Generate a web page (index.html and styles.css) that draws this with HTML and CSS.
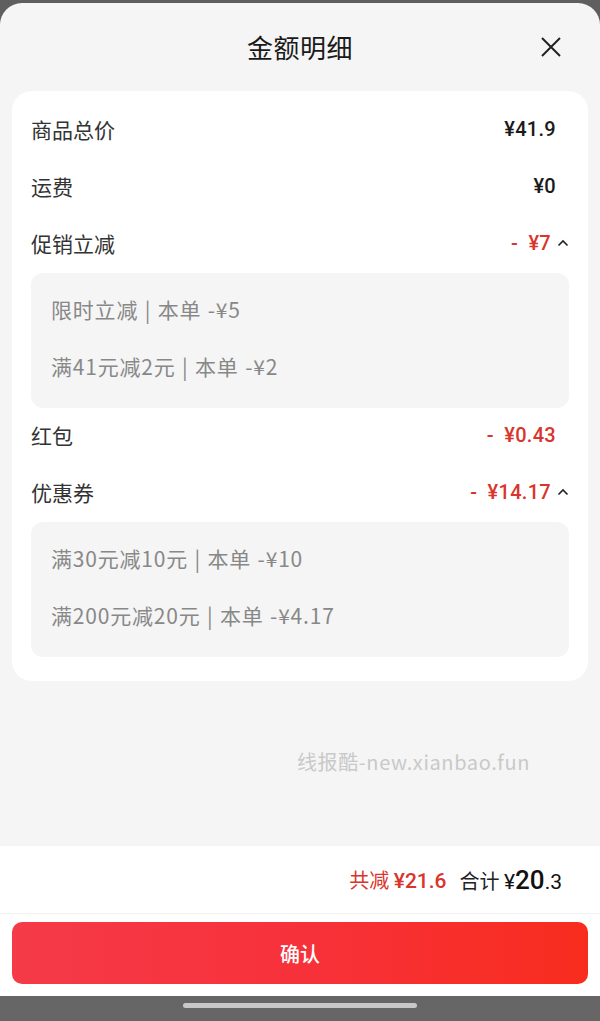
FILE: index.html
```html
<!DOCTYPE html>
<html lang="zh-CN">
<head>
    <meta charset="UTF-8">
    <meta name="viewport" content="width=device-width, initial-scale=1.0">
    <title>金额明细</title>
    <link rel="stylesheet" href="styles.css">
</head>
<body>
    <div class="sheet">
        <header class="sheet-header">
            <span></span>
            <h1>金额明细</h1>
            <button class="close-btn" aria-label="关闭">
                <svg width="22" height="22" viewBox="0 0 22 22"><path d="M2 2L20 20M20 2L2 20" stroke="#222" stroke-width="2" fill="none"/></svg>
            </button>
        </header>

        <section class="detail-card">
            <div class="row">
                <span class="label">商品总价</span>
                <span class="value plain">¥41.9</span>
            </div>
            <div class="row">
                <span class="label">运费</span>
                <span class="value plain">¥0</span>
            </div>
            <div class="row">
                <span class="label">促销立减</span>
                <span class="value-wrap">
                    <span class="value red">- ¥7</span>
                    <svg class="chevron" width="12" height="8" viewBox="0 0 12 8"><path d="M1.5 6.5L6 2L10.5 6.5" stroke="#222" stroke-width="1.6" fill="none"/></svg>
                </span>
            </div>
            <div class="sub-box">
                <div class="sub-line">限时立减 | 本单 -¥5</div>
                <div class="sub-line">满41元减2元 | 本单 -¥2</div>
            </div>
            <div class="row">
                <span class="label">红包</span>
                <span class="value red plain">- ¥0.43</span>
            </div>
            <div class="row">
                <span class="label">优惠券</span>
                <span class="value-wrap">
                    <span class="value red">- ¥14.17</span>
                    <svg class="chevron" width="12" height="8" viewBox="0 0 12 8"><path d="M1.5 6.5L6 2L10.5 6.5" stroke="#222" stroke-width="1.6" fill="none"/></svg>
                </span>
            </div>
            <div class="sub-box">
                <div class="sub-line">满30元减10元 | 本单 -¥10</div>
                <div class="sub-line">满200元减20元 | 本单 -¥4.17</div>
            </div>
        </section>

        <div class="spacer">
            <p class="watermark">线报酷-new.xianbao.fun</p>
        </div>

        <footer class="sheet-footer">
            <div class="summary">
                <span class="saved">共减 <b>¥21.6</b></span>
                <span class="total">合计 <b>¥<em>20</em>.3</b></span>
            </div>
            <div class="confirm-wrap">
                <button class="confirm-btn">确认</button>
            </div>
        </footer>
    </div>
    <div class="home-bar"><span class="home-pill"></span></div>
</body>
</html>
```

FILE: styles.css
```css
* {
    margin: 0;
    padding: 0;
    box-sizing: border-box;
}

body {
    width: 600px;
    height: 1021px;
    background: #5f5f5f;
    font-family: "Noto Sans CJK SC", "Noto Sans", sans-serif;
    color: #222;
    display: flex;
    flex-direction: column;
    padding-top: 3px;
    overflow: hidden;
}

.sheet {
    flex: 1;
    background: #f5f5f5;
    border-radius: 22px 22px 0 0;
    display: flex;
    flex-direction: column;
}

.sheet-header {
    height: 88px;
    display: grid;
    grid-template-columns: 1fr auto 1fr;
    align-items: center;
}

.sheet-header h1 {
    font-size: 26px;
    font-weight: 400;
    color: #1a1a1a;
    letter-spacing: 0.5px;
    padding-bottom: 2px;
}

.close-btn {
    justify-self: end;
    margin-right: 38px;
    background: none;
    border: none;
    display: flex;
}

.detail-card {
    margin: 0 12px;
    background: #fff;
    border-radius: 20px;
    padding: 11px 19px 24px;
}

.row {
    height: 57px;
    display: flex;
    align-items: center;
    justify-content: space-between;
    padding-bottom: 4px;
}

.label {
    font-size: 21px;
    color: #333;
}

.value {
    font-family: Roboto, "Noto Sans", sans-serif;
    font-size: 20px;
    font-weight: 500;
    color: #1a1a1a;
    letter-spacing: 0.3px;
}

.value.plain {
    margin-right: 13px;
}

.value.red {
    color: #d8352c;
    word-spacing: 5px;
}

.value-wrap {
    display: flex;
    align-items: center;
    gap: 6px;
}

.chevron {
    margin-top: 1px;
}

.sub-box {
    background: #f5f5f5;
    border-radius: 12px;
    padding: 10px 20px 11px;
}

.sub-line {
    height: 57px;
    display: flex;
    align-items: center;
    padding-bottom: 5px;
    font-size: 21px;
    letter-spacing: 0.8px;
    word-spacing: 1px;
    color: #888;
}

.spacer {
    flex: 1;
    padding-top: 66px;
}

.watermark {
    padding-left: 297px;
    font-size: 20px;
    letter-spacing: 0.6px;
    color: #c9c9c9;
}

.sheet-footer {
    background: #fff;
}

.summary {
    height: 68px;
    display: flex;
    justify-content: flex-end;
    align-items: center;
    gap: 13px;
    padding-right: 38px;
    font-size: 20px;
    border-bottom: 1px solid #f0f0f0;
}

.summary b {
    font-family: Roboto, "Noto Sans", sans-serif;
    font-weight: 500;
    font-size: 21px;
}

.saved {
    color: #d8352c;
}

.total b {
    font-weight: 400;
    color: #111;
}

.total em {
    font-style: normal;
    font-size: 26px;
    font-weight: 500;
}

.confirm-wrap {
    padding: 8px 12px 12px;
}

.confirm-btn {
    width: 100%;
    height: 62px;
    border: none;
    border-radius: 10px;
    background: linear-gradient(90deg, #f53a48, #f7313a 50%, #f82c1e);
    color: #fff;
    font-family: "Noto Sans CJK SC", sans-serif;
    font-size: 20px;
    font-weight: 500;
}

.home-bar {
    height: 25px;
    background: #666;
    display: flex;
    justify-content: center;
    padding-top: 7px;
}

.home-pill {
    width: 234px;
    height: 5px;
    border-radius: 3px;
    background: #c8c8c8;
}
```
